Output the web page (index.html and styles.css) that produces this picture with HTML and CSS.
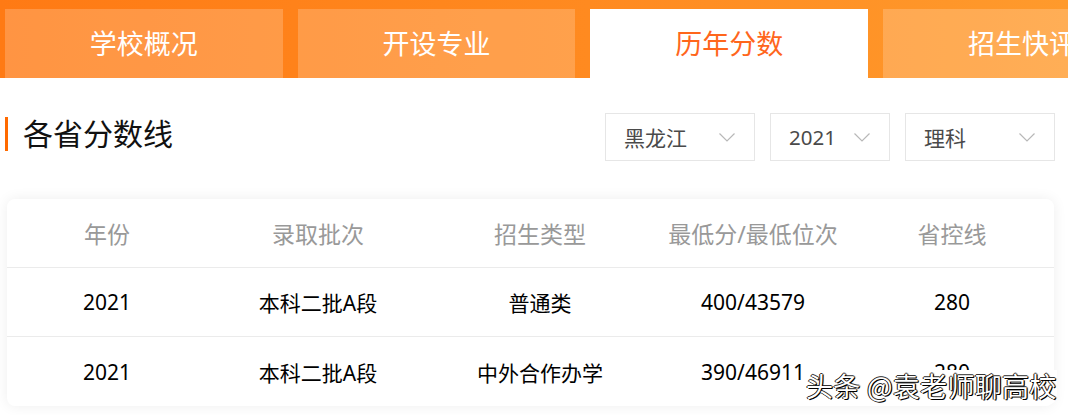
FILE: index.html
```html
<!DOCTYPE html>
<html lang="zh-CN">
<head>
<meta charset="utf-8">
<title>历年分数</title>
<link rel="stylesheet" href="styles.css">
</head>
<body>
<nav class="tabs">
  <div class="tab">学校概况</div>
  <div class="tab">开设专业</div>
  <div class="tab active">历年分数</div>
  <div class="tab">招生快评</div>
</nav>

<section class="head-row">
  <h2 class="title">各省分数线</h2>
  <div class="filters">
    <div class="select wide"><span>黑龙江</span><svg class="chev" viewBox="0 0 16 9"><polyline points="0.5,0.5 8,8 15.5,0.5"/></svg></div>
    <div class="select narrow"><span>2021</span><svg class="chev" viewBox="0 0 16 9"><polyline points="0.5,0.5 8,8 15.5,0.5"/></svg></div>
    <div class="select wide"><span>理科</span><svg class="chev" viewBox="0 0 16 9"><polyline points="0.5,0.5 8,8 15.5,0.5"/></svg></div>
  </div>
</section>

<section class="card">
  <div class="row th">
    <div>年份</div><div>录取批次</div><div>招生类型</div><div>最低分/最低位次</div><div>省控线</div>
  </div>
  <div class="row">
    <div>2021</div><div>本科二批A段</div><div>普通类</div><div>400/43579</div><div>280</div>
  </div>
  <div class="row last">
    <div>2021</div><div>本科二批A段</div><div>中外合作办学</div><div>390/46911</div><div>280</div>
  </div>
  <div class="watermark">头条 @袁老师聊高校</div>
</section>
</body>
</html>
```

FILE: styles.css
```css
* { box-sizing: border-box; }
html, body { height: 415px; }
body {
  margin: 0;
  background: #fff;
  font-family: "Noto Sans", "Noto Sans CJK SC", sans-serif;
  width: 1068px;
  overflow: hidden;
}
.tabs {
  height: 78px;
  padding: 9px 0 0 5px;
  display: flex;
  gap: 15px;
  background: linear-gradient(90deg, #ff7a14 0%, #ff8a20 55%, #ff9a2c 100%);
  overflow: hidden;
}
.tab {
  flex: 0 0 277.7px;
  height: 69px;
  display: flex;
  align-items: center;
  justify-content: center;
  font-size: 27px;
  color: #fff;
  background: rgba(255, 255, 255, 0.2);
  padding-bottom: 2px;
  white-space: nowrap;
}
.tab.active {
  background: #fff;
  color: #ff661c;
}
.head-row {
  display: flex;
  align-items: center;
  justify-content: space-between;
  margin-top: 35px;
  padding: 0 13px 0 5px;
  height: 48px;
}
.title {
  margin: 0 0 6px;
  font-weight: normal;
  font-size: 30px;
  line-height: 34px;
  color: #111;
  border-left: 3px solid #ff6a00;
  padding-left: 15px;
  height: 34px;
  display: flex;
  align-items: center;
}
.filters {
  display: flex;
  gap: 15px;
}
.select {
  height: 48px;
  border: 1px solid #e6e6e6;
  display: flex;
  align-items: center;
  justify-content: space-between;
  padding: 0 19px 0 18px;
  font-size: 21px;
  color: #4a4a4a;
}
.select.wide { width: 150px; }
.select.narrow { width: 120px; font-size: 20.5px; }
.chev {
  width: 16px;
  height: 9px;
  fill: none;
  stroke: #b8b8b8;
  stroke-width: 1.2;
}
.card {
  position: relative;
  margin: 38px 14px 0 7px;
  background: #fff;
  border-radius: 8px;
  box-shadow: 0 0 14px rgba(0, 0, 0, 0.07);
}
.row {
  display: grid;
  grid-template-columns: 200px 222px 222px 204px 194px;
  height: 69px;
  border-bottom: 1px solid #ebebeb;
  align-items: center;
  font-size: 21px;
  color: #000;
}
.row > div { text-align: center; }
.row.th {
  font-size: 23px;
  color: #999;
}
.row.last { border-bottom: 0; }
.watermark {
  position: absolute;
  left: 797px;
  top: 171px;
  padding: 0 0 2px 2px;
  background: #fff;
  font-family: "Noto Sans CJK SC", sans-serif;
  font-size: 27px;
  line-height: 32px;
  letter-spacing: 0.3px;
  white-space: nowrap;
  color: #fff;
  text-shadow: 1px 1px 0 #000, -1px 0 0 #111, 0 -1px 0 #333, 1px 0 1px #000;
  border-radius: 0 0 8px 0;
}
```
